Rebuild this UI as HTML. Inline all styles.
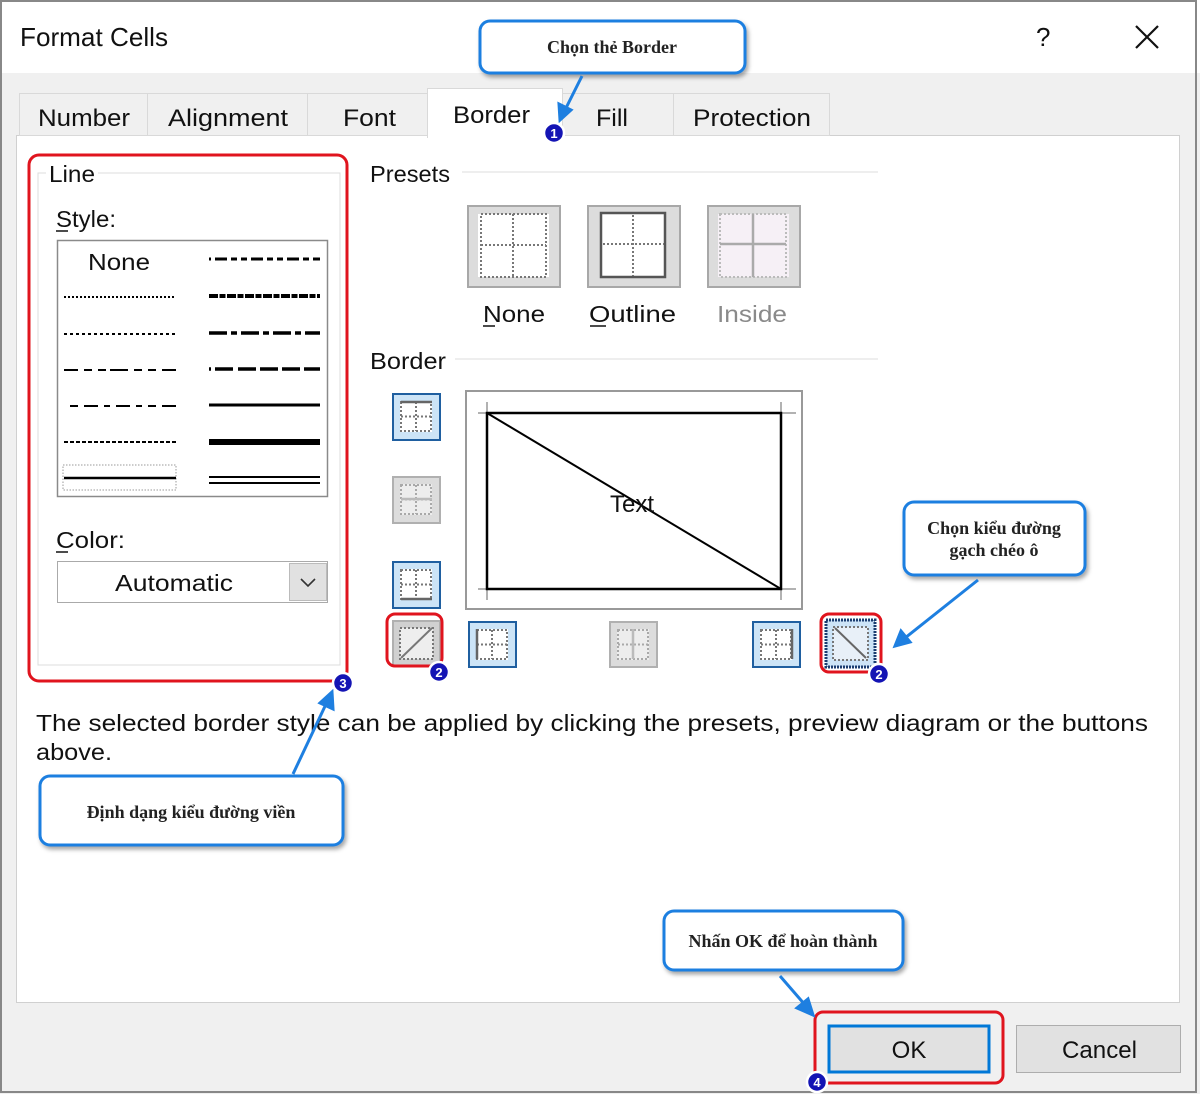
<!DOCTYPE html>
<html><head><meta charset="utf-8"><style>
html,body{margin:0;padding:0;background:#fff}
svg{display:block}
.ui{font-family:"Liberation Sans",sans-serif;fill:#111}
.co{font-family:"Liberation Serif","Noto Serif CJK SC",serif;font-weight:bold;fill:#222;font-size:18px}
</style></head><body>
<svg width="1200" height="1094" viewBox="0 0 1200 1094" xmlns="http://www.w3.org/2000/svg">
<defs>
<filter id="sh" x="-10%" y="-10%" width="130%" height="140%"><feDropShadow dx="2" dy="3" stdDeviation="2" flood-color="#000" flood-opacity="0.35"/></filter>
<g id="dg">
<rect x="7" y="7" width="32" height="31" fill="#fff"/>
<rect x="8" y="8" width="30" height="29" fill="none" stroke="#777" stroke-width="2" stroke-dasharray="2 2"/>
<path d="M23 8V37M8 22.5H38" stroke="#777" stroke-width="2" stroke-dasharray="2 2"/>
</g>
</defs>
<rect width="1200" height="1094" fill="#f0f0f0"/>
<rect x="0" y="0" width="1200" height="73" fill="#fff"/>
<rect x="1" y="1" width="1195" height="1091" fill="none" stroke="#888" stroke-width="2"/>
<text class="ui" x="20" y="46" font-size="26" textLength="148" lengthAdjust="spacingAndGlyphs">Format Cells</text>
<text class="ui" x="1036" y="46" font-size="26">?</text>
<path d="M1136 26L1158 48M1158 26L1136 48" stroke="#111" stroke-width="2.2"/>
<rect x="16.5" y="135.5" width="1163" height="867" fill="#fff" stroke="#d0d0d0"/>
<g stroke="#d9d9d9" fill="#f0f0f0">
<rect x="19.5" y="93.5" width="128" height="42"/>
<rect x="147.5" y="93.5" width="160" height="42"/>
<rect x="307.5" y="93.5" width="120" height="42"/>
<rect x="562.5" y="93.5" width="111" height="42"/>
<rect x="673.5" y="93.5" width="156" height="42"/>
</g>
<rect x="427.5" y="88.5" width="135" height="49" fill="#fff" stroke="#d9d9d9"/>
<rect x="428" y="134" width="134" height="4" fill="#fff"/>
<g class="ui" font-size="24" lengthAdjust="spacingAndGlyphs">
<text x="38" y="126" textLength="92" lengthAdjust="spacingAndGlyphs">Number</text>
<text x="168" y="126" textLength="120" lengthAdjust="spacingAndGlyphs">Alignment</text>
<text x="343" y="126" textLength="53" lengthAdjust="spacingAndGlyphs">Font</text>
<text x="453" y="123" textLength="77" lengthAdjust="spacingAndGlyphs">Border</text>
<text x="596" y="126" textLength="32" lengthAdjust="spacingAndGlyphs">Fill</text>
<text x="693" y="126" textLength="118" lengthAdjust="spacingAndGlyphs">Protection</text>
</g>
<path d="M46 173H38V665H340V173H98" fill="none" stroke="#dcdcdc"/>
<text class="ui" x="49" y="182" font-size="23" textLength="46" lengthAdjust="spacingAndGlyphs">Line</text>
<text class="ui" x="56" y="227" font-size="23" textLength="60" lengthAdjust="spacingAndGlyphs">Style:</text>
<path d="M56 231H68" stroke="#111" stroke-width="1.5"/>
<rect x="57.5" y="240.5" width="270" height="256" fill="#fff" stroke="#8a8a8a" stroke-width="1.5"/>
<text class="ui" x="88" y="270" font-size="23" textLength="62" lengthAdjust="spacingAndGlyphs">None</text>
<g stroke="#000" fill="none">
<path d="M64 297H176" stroke-width="2" stroke-dasharray="2 2"/>
<path d="M64 334H176" stroke-width="2" stroke-dasharray="3 3"/>
<path d="M64 370H78M84 370H92M98 370H106M110 370H128M134 370H142M148 370H156M162 370H176" stroke-width="2"/>
<path d="M70 406H78M84 406H98M104 406H110M116 406H130M136 406H142M148 406H156M162 406H176" stroke-width="2"/>
<path d="M64 442H176" stroke-width="2" stroke-dasharray="4 2"/>
<rect x="63" y="465" width="113" height="25" stroke="#999" stroke-dasharray="1.5 1.5"/>
<path d="M64 478H176" stroke-width="2.5"/>
<path d="M209 259H211M215 259H227M231 259H237M241 259H247M251 259H263M267 259H273M277 259H283M287 259H299M303 259H309M313 259H320" stroke-width="3"/>
<path d="M209 296H320" stroke-width="4" stroke-dasharray="9 1.5 6 1.5"/>
<path d="M209 333H227M231 333H237M241 333H259M263 333H269M273 333H291M295 333H301M305 333H320" stroke-width="3.5"/>
<path d="M209 369H211M215 369H233M238 369H256M260 369H278M282 369H300M304 369H320" stroke-width="3.5"/>
<path d="M209 405H320" stroke-width="3"/>
<path d="M209 442H320" stroke-width="6"/>
<path d="M209 477H320M209 483H320" stroke-width="2"/>
</g>
<text class="ui" x="56" y="548" font-size="23" textLength="69" lengthAdjust="spacingAndGlyphs">Color:</text>
<path d="M56 552H68" stroke="#111" stroke-width="1.5"/>
<rect x="57.5" y="561.5" width="270" height="41" fill="#fff" stroke="#aaa"/>
<rect x="289.5" y="563.5" width="37" height="37" fill="#e1e1e1" stroke="#bbb"/>
<path d="M301 579L308 586L315 579" fill="none" stroke="#333" stroke-width="1.6"/>
<text class="ui" x="115" y="591" font-size="23" textLength="118" lengthAdjust="spacingAndGlyphs">Automatic</text>
<text class="ui" x="370" y="182" font-size="23" textLength="80" lengthAdjust="spacingAndGlyphs">Presets</text>
<path d="M462 172H878" stroke="#dcdcdc"/>
<g>
<rect x="468" y="206" width="92" height="81" fill="#dcdcdc" stroke="#a8a8a8" stroke-width="2"/>
<rect x="478" y="214" width="71" height="63" fill="#fff"/>
<rect x="481" y="214" width="65" height="63" fill="none" stroke="#777" stroke-width="2" stroke-dasharray="2 2"/>
<path d="M513 214V277M481 245H546" stroke="#777" stroke-width="2" stroke-dasharray="2 2"/>
<rect x="588" y="206" width="92" height="81" fill="#dcdcdc" stroke="#a8a8a8" stroke-width="2"/>
<rect x="601" y="213" width="64" height="64" fill="#fff" stroke="#555" stroke-width="2.5"/>
<path d="M633 215V276M603 244H664" stroke="#777" stroke-width="2" stroke-dasharray="2 2"/>
<rect x="708" y="206" width="92" height="81" fill="#dcdcdc" stroke="#a8a8a8" stroke-width="2"/>
<rect x="718" y="214" width="71" height="63" fill="#f6f0f6"/>
<rect x="720" y="214" width="66" height="63" fill="none" stroke="#bbb" stroke-width="2" stroke-dasharray="2 2"/>
<path d="M753 214V277M720 244H786" stroke="#aaa" stroke-width="2.5"/>
</g>
<g class="ui" font-size="23">
<text x="483" y="322" textLength="62" lengthAdjust="spacingAndGlyphs">None</text>
<text x="589" y="322" textLength="87" lengthAdjust="spacingAndGlyphs">Outline</text>
<text x="717" y="322" fill="#8a8a8a" textLength="70" lengthAdjust="spacingAndGlyphs">Inside</text>
</g>
<path d="M483 326H495M590 326H606" stroke="#111" stroke-width="1.5"/>
<text class="ui" x="370" y="369" font-size="23" textLength="76" lengthAdjust="spacingAndGlyphs">Border</text>
<path d="M455 359H878" stroke="#dcdcdc"/>
<rect x="466" y="391" width="336" height="218" fill="#fff" stroke="#999" stroke-width="2"/>
<path d="M478 413H796M478 589H796M487 402V600M781 402V600" stroke="#999" stroke-width="1.5"/>
<rect x="487" y="413" width="294" height="176" fill="none" stroke="#000" stroke-width="2.5"/>
<path d="M487 413L781 589" stroke="#000" stroke-width="2"/>
<text class="ui" x="632" y="512" font-size="24" text-anchor="middle">Text</text>
<g>
<rect x="393" y="394" width="47" height="46" fill="#cce4f7" stroke="#1f5fa0" stroke-width="2"/>
<use href="#dg" x="393" y="394"/><path d="M401 402H432" stroke="#666" stroke-width="2.5"/>
<rect x="393" y="477" width="47" height="46" fill="#dcdcdc" stroke="#b0b0b0" stroke-width="2"/>
<use href="#dg" x="393" y="477" opacity="0.5"/><path d="M401 499H432" stroke="#bbb" stroke-width="2.5"/>
<rect x="393" y="562" width="47" height="46" fill="#cce4f7" stroke="#1f5fa0" stroke-width="2"/>
<use href="#dg" x="393" y="562"/><path d="M401 599H432" stroke="#666" stroke-width="2.5"/>
<rect x="393" y="621" width="47" height="45" fill="#d0d0d0" stroke="#b0b0b0" stroke-width="2"/>
<rect x="400" y="628" width="33" height="31" fill="#eee" stroke="#777" stroke-width="2" stroke-dasharray="2 2"/>
<path d="M401 658L432 628" stroke="#777" stroke-width="2"/>
<rect x="469" y="622" width="47" height="45" fill="#cce4f7" stroke="#1f5fa0" stroke-width="2"/>
<use href="#dg" x="469" y="622"/><path d="M477 629V659" stroke="#666" stroke-width="2.5"/>
<rect x="610" y="622" width="47" height="45" fill="#dcdcdc" stroke="#b0b0b0" stroke-width="2"/>
<use href="#dg" x="610" y="622" opacity="0.5"/><path d="M633 629V659" stroke="#bbb" stroke-width="2.5"/>
<rect x="753" y="622" width="47" height="45" fill="#cce4f7" stroke="#1f5fa0" stroke-width="2"/>
<use href="#dg" x="753" y="622"/><path d="M792 629V659" stroke="#666" stroke-width="2.5"/>
<rect x="826" y="620" width="49" height="47" fill="#cce4f7" stroke="#1a3d70" stroke-width="3" stroke-dasharray="2 1"/>
<rect x="833" y="627" width="35" height="33" fill="#e8f0f8" stroke="#777" stroke-width="2" stroke-dasharray="2 2"/>
<path d="M835 628L866 658" stroke="#666" stroke-width="2"/>
</g>
<text class="ui" x="36" y="731" font-size="23" textLength="1112" lengthAdjust="spacingAndGlyphs">The selected border style can be applied by clicking the presets, preview diagram or the buttons</text>
<text class="ui" x="36" y="760" font-size="23" textLength="76" lengthAdjust="spacingAndGlyphs">above.</text>
<rect x="829" y="1026" width="160" height="46" fill="#e1e1e1" stroke="#0078d7" stroke-width="3"/>
<text class="ui" x="909" y="1058" font-size="24" text-anchor="middle">OK</text>
<rect x="1016.5" y="1025.5" width="164" height="47" fill="#e1e1e1" stroke="#adadad"/>
<text class="ui" x="1062" y="1058" font-size="24" textLength="75" lengthAdjust="spacingAndGlyphs">Cancel</text>
<g fill="none" stroke="#e0141e" stroke-width="3">
<rect x="29" y="155" width="318" height="526" rx="10"/>
<rect x="387" y="614" width="55" height="52" rx="8"/>
<rect x="821" y="614" width="60" height="58" rx="8"/>
<rect x="815" y="1012" width="188" height="71" rx="8"/>
</g>
<g fill="#fff" stroke="#1e7fe0" stroke-width="3" filter="url(#sh)">
<rect x="480" y="21" width="265" height="52" rx="10"/>
<rect x="904" y="502" width="181" height="73" rx="10"/>
<rect x="40" y="776" width="303" height="69" rx="10"/>
<rect x="664" y="911" width="239" height="59" rx="10"/>
</g>
<text class="co" x="612" y="53" text-anchor="middle">Chọn thẻ Border</text>
<text class="co" x="994" y="534" text-anchor="middle">Chọn kiểu đường</text>
<text class="co" x="994" y="556" text-anchor="middle">gạch chéo ô</text>
<text class="co" x="191" y="818" text-anchor="middle">Định dạng kiểu đường viền</text>
<text class="co" x="783" y="947" text-anchor="middle">Nhấn OK để hoàn thành</text>
<g stroke="#1e7fe0" stroke-width="3" fill="#1e7fe0">
<path d="M582 76L565 110"/><path d="M560 120L559 104L571 110Z"/>
<path d="M978 580L905 638"/><path d="M895 646L901 631L910 642Z"/>
<path d="M293 774L327 702"/><path d="M332 692L333 709L320 703Z"/>
<path d="M780 976L806 1006"/><path d="M813 1015L797 1008L808 999Z"/>
</g>
<g stroke="#fff" stroke-width="2.5" fill="#1414b4">
<circle cx="554" cy="133" r="10"/>
<circle cx="343" cy="683" r="10"/>
<circle cx="439" cy="672" r="10"/>
<circle cx="879" cy="674" r="10"/>
<circle cx="817" cy="1082" r="10"/>
</g>
<g font-family="Liberation Sans,sans-serif" font-weight="bold" font-size="13" fill="#fff" text-anchor="middle">
<text x="554" y="138">1</text>
<text x="343" y="688">3</text>
<text x="439" y="677">2</text>
<text x="879" y="679">2</text>
<text x="817" y="1087">4</text>
</g>
</svg>
</body></html>
